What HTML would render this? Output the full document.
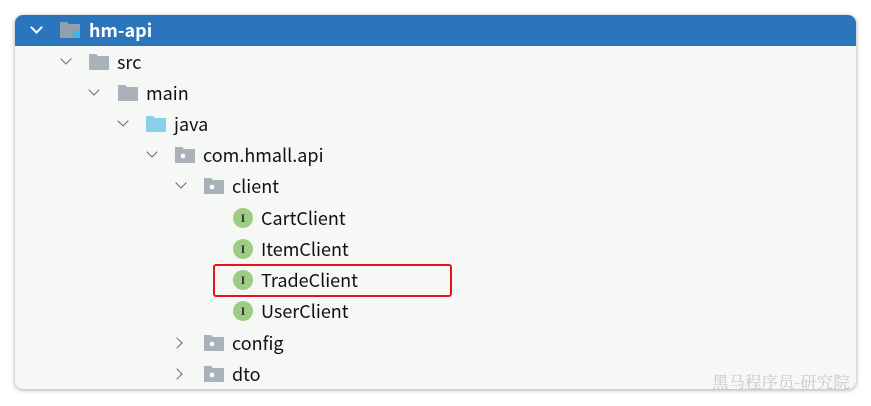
<!DOCTYPE html><html><head><style>
body{margin:0;width:871px;height:406px;background:#fff;position:relative;overflow:hidden;font-family:"Noto Sans CJK SC","Liberation Sans",sans-serif}
.p{position:absolute;left:15px;top:15px;width:841px;height:374px;background:#f6f8f5;border-radius:8px;box-shadow:0 1px 5px rgba(0,0,0,.35);overflow:hidden}
.h{position:absolute;left:0;top:0;width:100%;height:31px;background:#2b75bc}
.r{position:absolute;height:31px;line-height:31px;font-size:18px;color:#111;margin-top:1px}
.c{position:absolute;width:7px;height:7px;border-right:1.6px solid #666;border-bottom:1.6px solid #666}
.f{position:absolute;width:20px;height:16px}
.i{position:absolute;width:20px;height:20px;border-radius:50%;background:#9dcc85;color:#333;font:bold 12px "Liberation Serif",serif;text-align:center;line-height:21px}
</style></head><body>
<div class="p"><div class="h"></div></div>
<div class="c" style="left:32px;top:23px;transform:rotate(45deg);border-color:#fff;border-width:2px"></div>
<div class="c" style="left:62px;top:55px;transform:rotate(45deg)"></div>
<div class="c" style="left:90px;top:86px;transform:rotate(45deg)"></div>
<div class="c" style="left:119px;top:117px;transform:rotate(45deg)"></div>
<div class="c" style="left:148px;top:148px;transform:rotate(45deg)"></div>
<div class="c" style="left:177px;top:179px;transform:rotate(45deg)"></div>
<div class="c" style="left:173px;top:339px;transform:rotate(-45deg)"></div>
<div class="c" style="left:173px;top:370px;transform:rotate(-45deg)"></div>
<svg class="f" style="left:60px;top:22px" viewBox="0 0 20 16"><path d="M0 0h7l2 2h11v14H0z" fill="#8fa0b0"/><rect x="13" y="9" width="7" height="7" fill="#3fb5e6"/></svg>
<svg class="f" style="left:89px;top:54px" viewBox="0 0 20 16"><path d="M0 0h7l2 2h11v14H0z" fill="#aab2b9"/></svg>
<svg class="f" style="left:118px;top:85px" viewBox="0 0 20 16"><path d="M0 0h7l2 2h11v14H0z" fill="#aab2b9"/></svg>
<svg class="f" style="left:146px;top:116px" viewBox="0 0 20 16"><path d="M0 0h7l2 2h11v14H0z" fill="#88cfea"/></svg>
<svg class="f" style="left:175px;top:147px" viewBox="0 0 20 16"><path d="M0 0h7l2 2h11v14H0z" fill="#aab2b9"/><circle cx="8" cy="9" r="2.3" fill="#fff"/></svg>
<svg class="f" style="left:204px;top:178px" viewBox="0 0 20 16"><path d="M0 0h7l2 2h11v14H0z" fill="#aab2b9"/><circle cx="8" cy="9" r="2.3" fill="#fff"/></svg>
<svg class="f" style="left:204px;top:335px" viewBox="0 0 20 16"><path d="M0 0h7l2 2h11v14H0z" fill="#aab2b9"/><circle cx="8" cy="9" r="2.3" fill="#fff"/></svg>
<svg class="f" style="left:204px;top:366px" viewBox="0 0 20 16"><path d="M0 0h7l2 2h11v14H0z" fill="#aab2b9"/><circle cx="8" cy="9" r="2.3" fill="#fff"/></svg>
<div class="r" style="left:89px;top:14px;color:#fff;font-weight:bold">hm-api</div>
<div class="r" style="left:117px;top:46px">src</div>
<div class="r" style="left:146px;top:77px">main</div>
<div class="r" style="left:174px;top:108px">java</div>
<div class="r" style="left:203px;top:139px">com.hmall.api</div>
<div class="r" style="left:232px;top:170px">client</div>
<div class="i" style="left:233px;top:208px">I</div><div class="r" style="left:261px;top:202px">CartClient</div>
<div class="i" style="left:233px;top:239px">I</div><div class="r" style="left:261px;top:233px">ItemClient</div>
<div class="i" style="left:233px;top:270px">I</div><div class="r" style="left:261px;top:264px">TradeClient</div>
<div class="i" style="left:233px;top:301px">I</div><div class="r" style="left:261px;top:295px">UserClient</div>
<div class="r" style="left:232px;top:327px">config</div>
<div class="r" style="left:232px;top:358px">dto</div>
<div style="position:absolute;left:213px;top:264px;width:235px;height:29px;border:2px solid #e8121a;border-radius:3px"></div>
<div style="position:absolute;left:712px;top:369px;font-size:16.5px;color:#c8c8c8;font-family:'Noto Serif CJK SC',serif">黑马程序员-研究院</div>
</body></html>
